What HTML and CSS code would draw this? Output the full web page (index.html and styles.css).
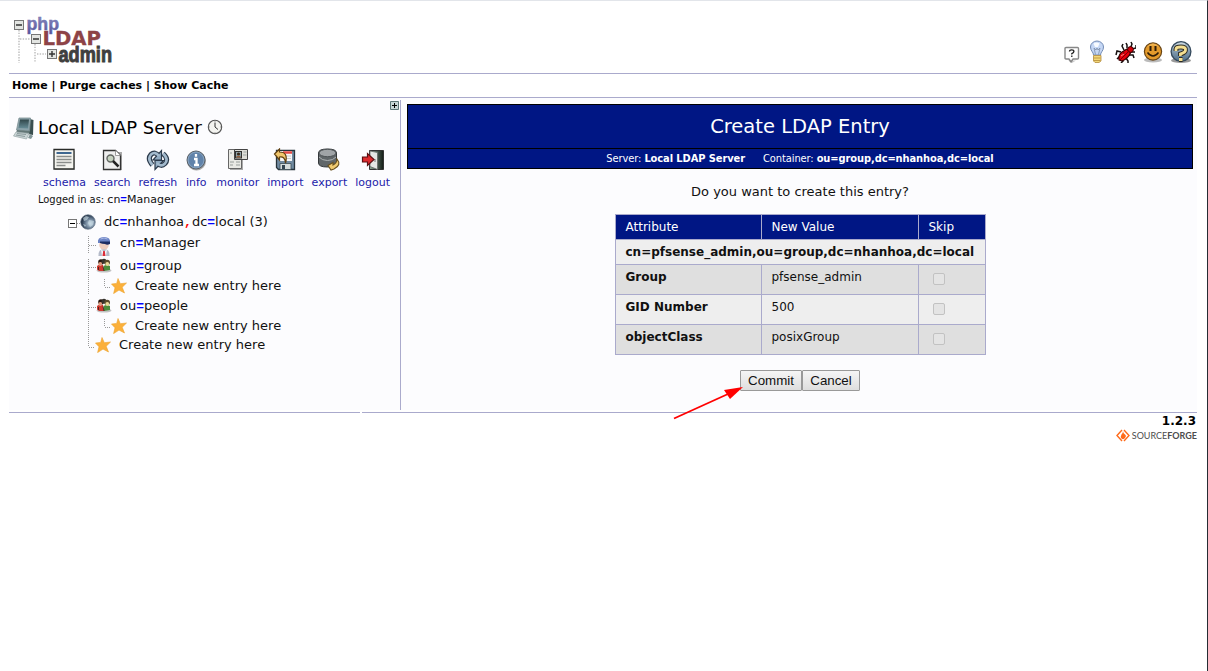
FILE: index.html
```html
<!DOCTYPE html>
<html lang="en">
<head>
<meta charset="utf-8">
<title>phpLDAPadmin (1.2.3)</title>
<link rel="stylesheet" href="styles.css">
</head>
<body>
<svg class="defs" width="0" height="0" aria-hidden="true">
  <defs>
    <linearGradient id="steel" x1="0" y1="0" x2="0" y2="1"><stop offset="0" stop-color="#b9cad6"/><stop offset="1" stop-color="#4d6d88"/></linearGradient>
    <linearGradient id="dark" x1="0" y1="0" x2="0" y2="1"><stop offset="0" stop-color="#30464a"/><stop offset="1" stop-color="#678d98"/></linearGradient>
    <radialGradient id="globe" cx=".65" cy=".6" r=".6"><stop offset="0" stop-color="#c8dbe8"/><stop offset=".6" stop-color="#60758c"/><stop offset="1" stop-color="#202f43"/></radialGradient>
    <linearGradient id="php" x1="0" y1="0" x2="0" y2="1"><stop offset="0" stop-color="#9494c8"/><stop offset="1" stop-color="#54549b"/></linearGradient>
    <linearGradient id="door"><stop offset="0" stop-color="#91aa97"/><stop offset="1" stop-color="#111b15"/></linearGradient>
    <symbol id="star" viewBox="0 0 16 16"><path d="M7 .5 9.3 5.7 15.5 5 11.2 9.3 13.5 15 8 12.1 2.6 15.6 4 9.8.5 6 5.7 5.4Z" fill="#fbb03b" stroke="#eda22c" stroke-width=".6"/></symbol>
    <symbol id="people" viewBox="0 0 16 16">
      <ellipse cx="8" cy="12.500" rx="7.500" ry="2" fill="#888" opacity=".5"/>
      <path d="M1 11.500V8q2-2.500 6-1l1 6H3Z" fill="#cf3a30"/><path d="M8 13 7.500 8q3-2 6.500 0v4Z" fill="#4b8c3b"/>
      <circle cx="5" cy="4" r="2.800" fill="#29170f"/><circle cx="8" cy="3.200" r="2.500" fill="#37332c"/><circle cx="11.200" cy="4.500" r="2.800" fill="#5b4c2c"/>
      <circle cx="4.300" cy="6" r="1.900" fill="#df9a7c"/><circle cx="11.300" cy="6" r="1.900" fill="#eadb97"/>
      <path d="M7 8.500 8 13M2.500 9v3" stroke="#331b18" fill="none" stroke-width=".8"/>
    </symbol>
  </defs>
</svg>
<div class="page">
  <header class="head">
    <svg class="logo" width="101" height="50" viewBox="0 0 101 50">
      <g stroke="#cfcfcf" stroke-width="2" stroke-dasharray="1.4 1.3" fill="none"><path d="M6 15V48M7 24H17M22 29V48M24 39H33"/></g>
      <g fill="#e3e5e2" stroke="#777" stroke-width="1"><rect x="1.500" y="5.500" width="9" height="9"/><rect x="18.500" y="19.500" width="9" height="9"/><rect x="34.500" y="34.500" width="9" height="9"/></g>
      <path d="M3 10H9M20 24H26M36 39H42M39 36V42" stroke="#333" stroke-width="1.400"/>
      <text class="logo-php" x="13.500" y="14.500" textLength="32.500" lengthAdjust="spacingAndGlyphs">php</text>
      <text class="logo-ldap" x="29.500" y="30" textLength="58.500" lengthAdjust="spacingAndGlyphs">LDAP</text>
      <text class="logo-admin" x="45.500" y="47" textLength="53.500" lengthAdjust="spacingAndGlyphs">admin</text>
    </svg>
    <div class="tools">
      <svg class="hint" width="16" height="18" viewBox="0 0 16 18"><path d="M4 14.500h8l-4 2.500Z" fill="#ccc"/><path d="M2 1.500h11.500q1 0 1 1V12q0 1-1 1H9L7 16l-2-3H2q-1 0-1-1V2.500q0-1 1-1Z" fill="#fff" stroke="#888" stroke-width="1.400" stroke-linejoin="round"/><path d="M5.500 5.500q0-1.700 2.200-1.700t2.200 1.600q0 1-2.100 2.200v1M7.800 9.500V11" fill="none" stroke="#222" stroke-width="1.300"/></svg>
      <svg class="bulb" width="16" height="24" viewBox="0 0 16 24"><path d="M4.500 15C4.500 12 1.500 11 1.500 7a6.500 6 0 0 1 13 0c0 4-3 5-3 8Z" fill="#c5d7f5" stroke="#728bb5"/><path d="M4.500 3.500q3-2 6 0L9 7H6Z" fill="#f8fbff"/><path d="M6.500 14.500 5 8l2 2 1-2 1 2 2-2-1.500 6.500" fill="none" stroke="#7b8da8" stroke-width=".8"/><path d="M4.500 15.500h7.500V21L10 22.500H6L4.500 21Z" fill="#f3d879" stroke="#b38c3c" stroke-width=".8"/><path d="M4.500 18h7M4.500 20.500h7" stroke="#c29b46"/></svg>
      <svg width="21" height="22" viewBox="0 0 21 22"><g fill="none" stroke="#161010" stroke-width="1.500"><path d="M6 11 2 10 1 14M9 9 7 5 8 3M12 7V4L11 2M15 8 17 3 16 1M17 8l4-1V4M15 11h5M14 14h4l1 3M11 17l2 3v2M7 18l1 2-2 2M5 15l-3 3"/></g><path d="M4 19Q3 14 7 11l5-3 4 3Q13 18 7 20Z" fill="#e6000c" stroke="#300" stroke-width="1.100"/><circle cx="15.500" cy="8.500" r="2.900" fill="#d2000a" stroke="#300"/><path d="M5 19 14 10M8 14l1-3" stroke="#7d0008"/><path d="m6 15 3-2" stroke="#ff8b83"/></svg>
      <svg width="20" height="22" viewBox="0 0 20 22"><ellipse cx="10" cy="19" rx="9" ry="2.500" fill="#bbb"/><circle cx="10" cy="10.500" r="8.600" fill="#e39a2c" stroke="#684312" stroke-width="1.200"/><path d="M4 6q6-7 12 0-6-3-12 0" fill="#f0b450"/><path d="M7.500 5v5M12.500 5v5" stroke="#2e1c08" stroke-width="2"/><path d="M4.500 11.500q5.500 7 11 0" fill="none" stroke="#2e1c08" stroke-width="1.500"/></svg>
      <svg width="22" height="24" viewBox="0 0 22 24"><ellipse cx="11" cy="20.500" rx="10" ry="2.500" fill="#999"/><circle cx="11" cy="11.500" r="9.900" fill="url(#steel)" stroke="#34495c" stroke-width="1.300"/><path d="M3 8q4-6 11-5l2 4-7 3Z" fill="#c7d6df"/><path d="M6 11V9q0-2 5-2t4.500 3q0 2.500-5 4v2M9 19.500h3.500" fill="none" stroke="#2b2920" stroke-width="4.800"/><path d="M6 11V9q0-2 5-2t4.500 3q0 2.500-5 4v2M9 19.500h3.500" fill="none" stroke="#f4df91" stroke-width="2.900"/></svg>
    </div>
  </header>
  <nav class="menu"><a>Home</a> | <a>Purge caches</a> | <a>Show Cache</a></nav>
  <div class="columns">
    <aside class="side">
      <svg class="expand" width="9" height="9" viewBox="0 0 9 9"><path d="M.5.500h8v8h-8Z" fill="#c8d6d6" stroke="#5e7777"/><path d="M2 4.500h5M4.500 2v5" stroke="#000"/></svg>
      <div class="server">
        <svg width="22" height="24" viewBox="0 0 22 24"><path d="M17 3 20.500 4 20 19 15 18Z" fill="#394e4f"/><path d="M6 2h11.500l-1 13L3.500 14Z" fill="#8ba2aa" stroke="#7b8f93" stroke-width=".8"/><path d="M7 3.500h9L15 12.500 5.500 12Z" fill="url(#dark)"/><path d="m4 14 13 1-1 3-13-1Z" fill="#627676"/><path d="m3 16 13 1.500-2.500 5.500L.5 20Z" fill="#c9d4d5" stroke="#a0adae" stroke-width=".8"/><path d="m4 17.500 9 1M3 19l9 1.500" stroke="#8b9b9d"/><path d="m17 18 3 2-2 3-3-1Z" fill="#849799"/></svg>
        <span>Local LDAP Server</span>
        <svg class="clock" width="16" height="16" viewBox="0 0 16 16"><circle cx="8" cy="8" r="6.700" fill="#f4f4f0" stroke="#555" stroke-width="1.100"/><path d="M8 3.500V8l3 2.500" fill="none" stroke="#333"/><path d="M8 2v1M2 8h1M13 8h1M8 13v1" stroke="#999"/></svg>
      </div>
      <div class="actions">
        <a><svg width="24" height="24" viewBox="0 0 24 24"><path d="M3 3h20v19H3Z" fill="#999" opacity=".5"/><path d="M2 1.500h20v19.500H2Z" fill="#f4f4ef" stroke="#292b29" stroke-width="1.300"/><path d="M4.500 5h15" stroke="#3f6790" stroke-width="2"/><path d="M4.500 8.500h15M4.500 11.500h15M4.500 14.500h15M4.500 17.500h9" stroke="#8a8d8b" stroke-width="1.300"/></svg>schema</a>
        <a><svg width="24" height="24" viewBox="0 0 24 24"><path d="M5 4h17v18H5Z" fill="#aaa"/><path d="M3.500 2.500h12l5 5v14h-17Z" fill="#eee" stroke="#333" stroke-width="1.300"/><path d="M15.500 2.500v5h5" fill="#fff" stroke="#888" stroke-width=".8"/><circle cx="10.500" cy="10.500" r="3.500" fill="#c5d2bf" stroke="#626662" stroke-width="1.400"/><path d="m13 13 5.500 5.500" stroke="#222" stroke-width="2.500"/></svg>search</a>
        <a><svg width="24" height="24" viewBox="0 0 24 24"><g fill="none" stroke-linejoin="round"><path d="M6.500 17Q1 11 5 6.500 9 3 13 8" stroke="#2c3b4c" stroke-width="5"/><path d="M17 5.500q6 5.500 2 10-4 4-8-.5" stroke="#2c3b4c" stroke-width="5"/></g><path d="M15.500 2.500V12H7Z" fill="#91abc1" stroke="#2c3b4c" stroke-width="1.200"/><path d="M9 21.500V12.500h8.500Z" fill="#91abc1" stroke="#2c3b4c" stroke-width="1.200"/><path d="M6.500 17Q1 11 5 6.500 9 3 13 8M17 5.500q6 5.500 2 10-4 4-8-.5" fill="none" stroke="#a3bacd" stroke-width="2.600"/></svg>refresh</a>
        <a><svg width="24" height="24" viewBox="0 0 24 24"><circle cx="12.500" cy="13" r="9.500" fill="#aaa"/><circle cx="12" cy="12" r="9" fill="#6183aa" stroke="#5b6065"/><circle cx="12" cy="12" r="7.900" fill="none" stroke="#87a3bf"/><path d="M12 6v2.800M10 11h2.500v6M10 17h5" fill="none" stroke="#fff" stroke-width="2.300"/></svg>info</a>
        <a><svg width="24" height="24" viewBox="0 0 24 24"><path d="M4 3h13v19H4Z" fill="#aaa"/><path d="M2.500 1.500h13v19h-13Z" fill="#e9e9e4" stroke="#666"/><path d="M8.500 1.500h13v10h-13Z" fill="#deddd7" stroke="#444"/><rect x="9.500" y="3.500" width="6" height="6.500" fill="#8fa1a7" stroke="#30302e"/><circle cx="12.500" cy="6" r="1.600" fill="#392818"/><path d="M10.500 9.500v-1.500h4v1.500Z" fill="#945e3b"/><path d="M17.500 4h3M17 7h3.500M4 5h2M4 14h4M4 17h3M10 14h4M10 17h4" stroke="#b2b6b2" stroke-width="1.300"/></svg>monitor</a>
        <a><svg width="24" height="24" viewBox="0 0 24 24"><path d="M3.500 2.500h18v19h-16l-2-2Z" fill="#718ba1" stroke="#28343c" stroke-width="1.300"/><path d="M6 3h13v10H6Z" fill="#f8f8f8"/><path d="M10 4.500h9" stroke="#e54844" stroke-width="2.500"/><path d="M11 8h7M11 10.500h7" stroke="#c8c8c8"/><path d="M7 15.500h11v6H7Z" fill="#d6dddc" stroke="#3b4c55" stroke-width=".8"/><path d="M9 17h3v4H9Z" fill="#334551"/><path d="m1.500 6 5-5v3q9 0 6 11Q12 8 6.500 9v3Z" fill="#f1c66c" stroke="#604011" stroke-width="1.200"/></svg>import</a>
        <a><svg width="24" height="24" viewBox="0 0 24 24"><path d="M1.500 5q0-4 9-4t9 4v10q0 4-9 4t-9-4Z" fill="#606669" stroke="#34383b"/><ellipse cx="10.500" cy="5" rx="8.500" ry="3.700" fill="#a0a4a7" stroke="#505558"/><path d="M2 9q3 3.500 8.500 3.500T19 9" stroke="#aeb3b4" fill="none"/><path d="M20 11q5 6-3 10l-3 1-3-4.500 5-3V17q4-2 4-6Z" fill="#f0ca70" stroke="#69511f" stroke-width="1.100"/></svg>export</a>
        <a><svg width="24" height="24" viewBox="0 0 24 24"><path d="M8.500 2.500h14v19h-14Z" fill="url(#door)" stroke="#333"/><path d="m9 3 7.500 1.500v17L9 18.500Z" fill="#e5e7e4" stroke="#656a66" stroke-width=".8"/><path d="M14 11v3" stroke="#777"/><path d="M1.500 9h5V5.500l6.500 6-6.500 6V14h-5Z" fill="#dd2b2e" stroke="#5c1012" stroke-width="1.200"/></svg>logout</a>
      </div>
      <div class="login"><span class="narrow">Logged in as: </span>cn<b class="eq">=</b>Manager</div>
      <div class="tree">
        <div class="row root">
          <svg width="12" height="20" viewBox="0 0 12 20"><rect x=".5" y="6.500" width="8" height="8" fill="#fff" stroke="#777"/><path d="M2 10.500h5" stroke="#000"/><path d="M9 10.500h3" stroke="#999" stroke-dasharray="1 1"/></svg>
          <svg width="16" height="16" viewBox="0 0 16 16"><circle cx="8" cy="8" r="7.300" fill="url(#globe)" stroke="#68788a" stroke-width=".7"/><path d="m3 4 3-2 3 1-2 3-3 1ZM9 6l5 1-1 4-3 2-2-4ZM3 10l3 1-1 2Z" fill="#c8dae4" opacity=".65"/></svg>
          <span>dc<b class="eq">=</b>nhanhoa<b class="comma">,</b>dc<b class="eq">=</b>local (3)</span>
        </div>
        <div class="row manager">
          <svg width="8" height="22" viewBox="0 0 8 22"><path d="M.5 2v17M1 11.500h7" stroke="#999" stroke-dasharray="1 1"/></svg>
          <svg class="person" width="16" height="20" viewBox="0 0 16 20"><path d="M2.500 20q-.5-7 5.500-7t5.500 7Z" fill="#b4bac9"/><path d="m5 13.500 3 2 3-2-1 6.500H6Z" fill="#f3f4fa"/><path d="M7.200 15h1.600l.7 5h-3Z" fill="#db2d38"/><ellipse cx="8" cy="9" rx="4.800" ry="4.600" fill="#efcdbf"/><path d="M2 7q-1-6 6-6t6 6Z" fill="#6a82c4"/><path d="M4 5.500h10v2.500q-3 1.500-5 0-3 0-5-1Z" fill="#1d2c63"/><path d="M4.500 3q3.500-2 7 0" stroke="#a9b8e4" fill="none"/></svg>
          <span>cn<b class="eq">=</b>Manager</span>
        </div>
        <div class="row">
          <svg width="8" height="20" viewBox="0 0 8 20"><path d="M.5 2v18M1 10.500h7" stroke="#999" stroke-dasharray="1 1"/></svg>
          <svg width="16" height="16"><use href="#people"/></svg>
          <span>ou<b class="eq">=</b>group</span>
        </div>
        <div class="row leaf">
          <svg width="23" height="20" viewBox="0 0 23 20"><path d="M.5 0v18M16.500 2v8M17 10.500h6" fill="none" stroke="#999" stroke-dasharray="1 1"/></svg>
          <svg width="16" height="16"><use href="#star"/></svg>
          <span>Create new entry here</span>
        </div>
        <div class="row">
          <svg width="8" height="20" viewBox="0 0 8 20"><path d="M.5 2v18M1 10.500h7" stroke="#999" stroke-dasharray="1 1"/></svg>
          <svg width="16" height="16"><use href="#people"/></svg>
          <span>ou<b class="eq">=</b>people</span>
        </div>
        <div class="row leaf">
          <svg width="23" height="20" viewBox="0 0 23 20"><path d="M.5 0v20M16.500 2v8M17 10.500h6" fill="none" stroke="#999" stroke-dasharray="1 1"/></svg>
          <svg width="16" height="16"><use href="#star"/></svg>
          <span>Create new entry here</span>
        </div>
        <div class="row leaf last">
          <svg width="7" height="18" viewBox="0 0 7 18"><path d="M.5 0v10M1 10.500h6" fill="none" stroke="#999" stroke-dasharray="1 1"/></svg>
          <svg width="16" height="16"><use href="#star"/></svg>
          <span>Create new entry here</span>
        </div>
      </div>
    </aside>
    <main class="main">
      <h1 class="title">Create LDAP Entry</h1>
      <div class="subtitle"><span>Server: <b>Local LDAP Server</b></span><span>Container: <b>ou=group,dc=nhanhoa,dc=local</b></span></div>
      <p class="question">Do you want to create this entry?</p>
      <table class="entry">
        <colgroup><col class="c1"><col class="c2"><col class="c3"></colgroup>
        <tr class="th"><td>Attribute</td><td>New Value</td><td>Skip</td></tr>
        <tr class="dn"><td colspan="3">cn=pfsense_admin,ou=group,dc=nhanhoa,dc=local</td></tr>
        <tr class="even"><td><b>Group</b></td><td>pfsense_admin</td><td><span class="check"></span></td></tr>
        <tr class="odd"><td><b>GID Number</b></td><td>500</td><td><span class="check"></span></td></tr>
        <tr class="even"><td><b>objectClass</b></td><td>posixGroup</td><td><span class="check"></span></td></tr>
      </table>
      <div class="buttons"><button class="commit">Commit</button><button class="cancel">Cancel</button></div>
    </main>
  </div>
  <div class="rule"><i class="rule-left"></i><i class="rule-right"></i></div>
  <footer class="foot">
    <b>1.2.3</b>
    <div class="sf"><svg width="14" height="13" viewBox="0 0 14 13"><path d="M6 1 1 6.500l5 5.500M8 1l5 5.500L8 12" fill="none" stroke="#ff6a19" stroke-width="1.400"/><path d="M7 2q0 2 2 3.500T8.500 9.500Q7 11 5.500 9.500t0-4Q7 4 7 2Z" fill="#ff6a19"/></svg><span>SOURCE<b>FORGE</b></span></div>
  </footer>
</div>
<svg class="arrow" width="72" height="36" viewBox="0 0 72 36"><path d="M2 33.500 56 9" stroke="#f00" stroke-width="1.800"/><path d="M71 2 58 14 52 5Z" fill="#f00"/></svg>
</body>
</html>
```
FILE: styles.css
```css
* { box-sizing: border-box; }
body {
  margin: 0;
  height: 671px;
  overflow: hidden;
  background: #fff;
  border-top: 1px solid #e2e5ea;
  border-right: 1px solid #252c33;
  font: 13px "DejaVu Sans", sans-serif;
  color: #111;
}
svg { display: block; flex: none; }
.defs { position: absolute; }
.page { width: 1188px; margin-left: 9px; }
.head {
  height: 73px;
  display: flex;
  justify-content: space-between;
  align-items: flex-start;
  padding: 14px 5px 0 4px;
  border-bottom: 1px solid #aaaacc;
}
.logo { overflow: visible; }
.logo-php { font: bold 19px "Liberation Sans", sans-serif; fill: url(#php); stroke: #7070ac; stroke-width: .5; }
.logo-ldap { font: bold 20px "DejaVu Sans", sans-serif; fill: #8d4347; stroke: #8d4347; stroke-width: .3; }
.logo-admin { font: bold 22.5px "Liberation Sans", sans-serif; fill: #3f3f3f; stroke: #3f3f3f; stroke-width: 1; }
.tools { display: flex; align-items: center; gap: 7px; padding-top: 25px; }
.hint { margin: 5px 2px 0 0; }
.bulb { margin-right: 3px; }
.menu {
  height: 24px;
  padding-left: 3px;
  border-bottom: 1px solid #aaaacc;
  font: bold 11px/24px "DejaVu Sans", sans-serif;
  color: #000;
  white-space: pre;
}
.columns { display: flex; height: 312px; padding-top: 2px; background: #fcfcfe; }
.side { width: 392px; border-right: 1px solid #aaaacc; }
.expand { margin: 1px 1px 0 auto; }
.server { display: flex; align-items: center; height: 24px; margin: 6px 0 0 4px; font-size: 18px; color: #000; }
.server span { margin: -2px 0 0 3px; }
.clock { margin: -2px 0 0 5px; }
.actions { display: flex; gap: 8px; margin: 8px 0 0 34px; }
.actions a { display: flex; flex-direction: column; align-items: center; gap: 4px; font-size: 11px; line-height: 14px; color: #2222aa; }
.actions svg { margin-left: -1px; margin-right: -1px; }
.actions a:nth-child(n+5) { position: static; }
.actions a:nth-child(4) { margin-right: 1px; }
.login { margin: 3px 0 0 29px; font-size: 11px; line-height: 14px; white-space: pre; }
.narrow { font-family: "DejaVu Sans Condensed", "DejaVu Sans", sans-serif; font-stretch: condensed; }
.eq, .comma { font-family: "Liberation Mono", monospace; line-height: 1; }
.eq { color: #0000ff; }
.comma { color: #ff0000; }
.tree { margin: 6px 0 0 79px; line-height: 20px; white-space: nowrap; }
.row { display: flex; align-items: center; height: 20px; }
.row span { margin: -3px 0 0 8px; }
.row > svg + svg { margin-top: -2px; }
.root { margin-left: -20px; }
.manager { height: 24px; }
.manager span { margin-top: -5px; }
.row > .person { margin-top: 1px; }
.last { height: 18px; }
.main { flex: 1; padding: 4px 4px 0 6px; text-align: center; }
.title {
  margin: 0;
  height: 45px;
  border: 1px solid #000;
  background: #001684;
  color: #fff;
  font: 19.5px/43px "DejaVu Sans", sans-serif;
}
.subtitle {
  display: flex;
  justify-content: center;
  gap: 18px;
  height: 20px;
  border: 1px solid #000;
  border-top: 0;
  background: #001684;
  color: #fff;
  font-family: "DejaVu Sans Condensed", "DejaVu Sans", sans-serif;
  font-stretch: condensed;
  font-size: 11px;
  letter-spacing: -.09px;
  line-height: 19px;
}
.question { margin: 13px 0 12px; line-height: 20px; }
.entry { width: 371px; margin: 0 auto; border-collapse: collapse; table-layout: fixed; font-size: 12px; text-align: left; }
.c1 { width: 146px; }
.c2 { width: 157px; }
.c3 { width: 67px; }
.entry td { height: 30px; padding: 4px 10px 0; border: 1px solid #aaaacc; vertical-align: top; line-height: 16px; }
.entry .th td { height: 25px; background: #001684; color: #fff; }
.entry .dn td { height: 25px; background: #eee; font-weight: bold; white-space: nowrap; }
.even { background: #dfdfdf; }
.odd { background: #eee; }
.check { display: block; width: 12px; height: 12px; margin: 4px 0 0 4px; border: 1px solid #c2c2c2; border-radius: 2px; background: #e4e4e4; }
.buttons { display: flex; justify-content: center; margin-top: 15px; }
.buttons button {
  height: 21px;
  padding: 0;
  border: 1px solid #999;
  border-radius: 1px;
  background: linear-gradient(#f5f5f5, #dedede);
  font: 13.333px/18px "Liberation Sans", sans-serif;
  color: #111;
}
.commit { width: 62px; }
.cancel { width: 58px; }
.rule { display: flex; gap: 2px; height: 3px; align-items: flex-end; }
.rule i { height: 1px; background: #aaaacc; }
.rule-left { width: 351px; }
.rule-right { flex: 1; }
.foot { display: flex; flex-direction: column; align-items: flex-end; font-size: 12px; line-height: 16px; color: #000; }
.foot > b { margin-right: 1px; }
.sf { display: flex; align-items: center; gap: 2px; font: 9px/13px Lato, sans-serif; color: #4d4d4d; }
.arrow { position: absolute; left: 672px; top: 385px; }
```
